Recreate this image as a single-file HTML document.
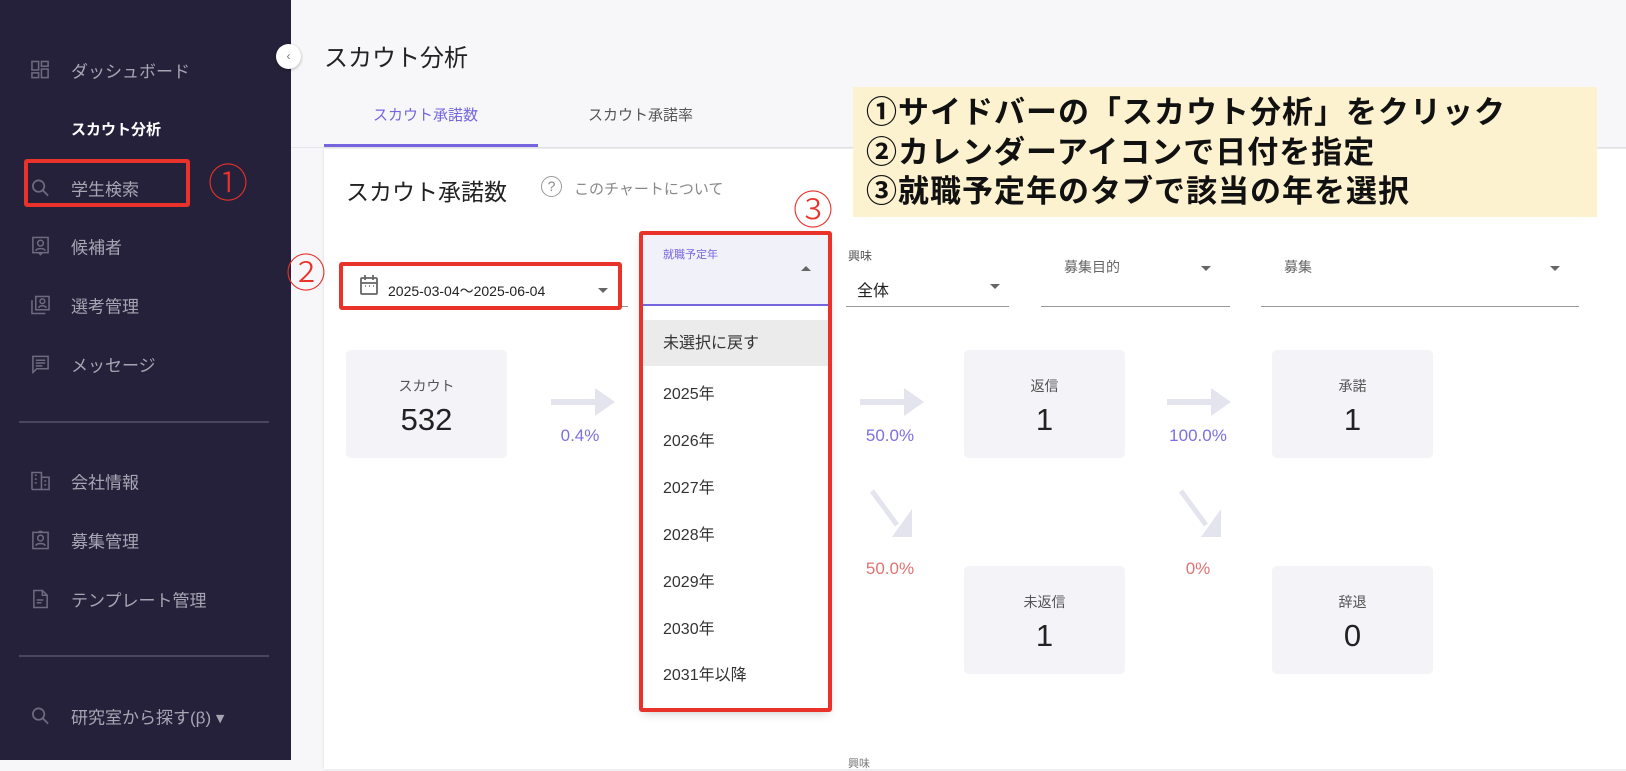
<!DOCTYPE html>
<html><head><meta charset="utf-8"><style>
*{margin:0;padding:0;box-sizing:border-box}
body{width:1626px;height:760px;overflow:hidden;background:#f7f7fa;font-family:"Liberation Sans","Noto Sans CJK JP",sans-serif;position:relative;color:#222}
.a{position:absolute;white-space:nowrap}
.side{position:absolute;left:0;top:0;width:291px;height:760px;background:#25213a}
.si{position:absolute;left:71px;color:#a7a5b3;font-size:17px;transform:translateY(-50%)}
.ic{position:absolute;left:31px;width:19px;height:19px;transform:translateY(-50%)}
.div{position:absolute;left:19px;width:250px;height:2px;background:#4a4660}
.red{position:absolute;border:4px solid #e8322a;border-radius:3px}
.circ{position:absolute;color:#e8322a;font-size:40px;line-height:1;font-weight:300}
.box{position:absolute;width:161px;height:108px;background:#f3f3f8;border-radius:5px;text-align:center}
.box .l{margin-top:26px;font-size:14px;color:#555}
.box .n{font-size:31px;color:#222;margin-top:6px}
.pct{position:absolute;font-size:17px;transform:translateX(-50%)}
.mi{position:absolute;left:663px;font-size:16px;color:#333;transform:translateY(-50%)}
.ul{position:absolute;height:1px;background:#999}
.tri{position:absolute;width:0;height:0;border-left:5px solid transparent;border-right:5px solid transparent;border-top:5px solid #666}
</style></head><body>
<div class="side"></div>
<svg class="ic" style="top:70px" viewBox="0 0 20 20" fill="none" stroke="#6e6b80" stroke-width="1.6"><rect x="1" y="1" width="7" height="9"/><rect x="11" y="1" width="7" height="5"/><rect x="1" y="13" width="7" height="5"/><rect x="11" y="9" width="7" height="9"/></svg>
<div class="si" style="top:70px">ダッシュボード</div>
<div class="si" style="top:129px;color:#fff;font-weight:bold;font-size:15px">スカウト分析</div>
<svg class="ic" style="top:188px" viewBox="0 0 20 20" fill="none" stroke="#6e6b80" stroke-width="1.8"><circle cx="8" cy="8" r="6"/><path d="M12.5 12.5L18 18"/></svg>
<div class="si" style="top:188px">学生検索</div>
<svg class="ic" style="top:246px" viewBox="0 0 20 20" fill="none" stroke="#6e6b80" stroke-width="1.6"><rect x="2" y="1" width="16" height="16"/><circle cx="10" cy="7" r="3"/><path d="M5 15c1-3 9-3 10 0M8 17l2 2 2-2"/></svg>
<div class="si" style="top:246px">候補者</div>
<svg class="ic" style="top:305px" viewBox="0 0 20 20" fill="none" stroke="#6e6b80" stroke-width="1.6"><rect x="5" y="1" width="14" height="14"/><path d="M1 5v14h14"/><circle cx="12" cy="6" r="2.5"/><path d="M8 13c1-3 7-3 8 0"/></svg>
<div class="si" style="top:305px">選考管理</div>
<svg class="ic" style="top:364px" viewBox="0 0 20 20" fill="none" stroke="#6e6b80" stroke-width="1.6"><path d="M2 2h16v13H6l-4 4z"/><path d="M5 6h10M5 9h10M5 12h7"/></svg>
<div class="si" style="top:364px">メッセージ</div>
<div class="div" style="top:421px"></div>
<svg class="ic" style="top:481px" viewBox="0 0 20 20" fill="none" stroke="#6e6b80" stroke-width="1.6"><path d="M1 19V1h10v18M11 6h8v13H1"/><path d="M4 4h2M4 8h2M4 12h2M14 10h2M14 14h2"/></svg>
<div class="si" style="top:481px">会社情報</div>
<svg class="ic" style="top:540px" viewBox="0 0 20 20" fill="none" stroke="#6e6b80" stroke-width="1.6"><rect x="2" y="2" width="16" height="17"/><circle cx="10" cy="8" r="3"/><path d="M5 16c1-3 9-3 10 0M8 1h4"/></svg>
<div class="si" style="top:540px">募集管理</div>
<svg class="ic" style="top:599px" viewBox="0 0 20 20" fill="none" stroke="#6e6b80" stroke-width="1.6"><path d="M3 1h9l5 5v13H3z"/><path d="M12 1v5h5M6 11h7M6 14h5"/></svg>
<div class="si" style="top:599px">テンプレート管理</div>
<div class="div" style="top:655px"></div>
<svg class="ic" style="top:716px" viewBox="0 0 20 20" fill="none" stroke="#6e6b80" stroke-width="1.8"><circle cx="8" cy="8" r="6"/><path d="M12.5 12.5L18 18"/></svg>
<div class="si" style="top:716px">研究室から探す(β) ▾</div>
<div class="red" style="left:24px;top:159px;width:166px;height:48px"></div>
<div class="circ" style="left:208px;top:164px">①</div>
<div class="a" style="left:276px;top:44px;width:25px;height:25px;border-radius:50%;background:#fff;box-shadow:0 1px 3px rgba(0,0,0,.3);font-size:12px;color:#777;text-align:center;line-height:24px">‹</div>

<div class="a" style="left:324px;top:38px;font-size:24px;color:#222">スカウト分析</div>
<div class="a" style="left:291px;top:147px;width:1335px;height:1px;background:#e6e6ec"></div>
<div class="a" style="left:373px;top:104px;font-size:15px;color:#7566e0">スカウト承諾数</div>
<div class="a" style="left:588px;top:104px;font-size:15px;color:#555">スカウト承諾率</div>
<div class="a" style="left:324px;top:144px;width:214px;height:3px;background:#7566e0"></div>
<div class="a" style="left:324px;top:149px;width:1310px;height:620px;background:#fff;box-shadow:0 0 3px rgba(0,0,0,.12)"></div>
<div class="a" style="left:346px;top:173px;font-size:23px;color:#222">スカウト承諾数</div>
<div class="a" style="left:541px;top:176px;width:21px;height:21px;border:1.5px solid #999;border-radius:50%;text-align:center;font-size:14px;line-height:18px;color:#888">?</div>
<div class="a" style="left:574px;top:178px;font-size:15px;color:#888">このチャートについて</div>

<div class="a" style="left:853px;top:87px;width:744px;height:130px;background:#fdf2d0"></div>
<div class="a" style="left:866px;top:93px;font-size:31px;letter-spacing:1px;line-height:39.5px;font-weight:bold;color:#111">①サイドバーの「スカウト分析」をクリック<br>②カレンダーアイコンで日付を指定<br>③就職予定年のタブで該当の年を選択</div>

<!-- date -->
<div class="ul" style="left:343px;top:306px;width:285px"></div>
<svg class="a" style="left:359px;top:274px" width="20" height="22" viewBox="0 0 20 22" fill="none" stroke="#666" stroke-width="1.8"><rect x="2" y="4" width="16" height="16" rx="1"/><path d="M2 9h16M6 1v5M14 1v5"/><path d="M6 12h1M10 12h1M14 12h1" stroke-width="1.5"/></svg>
<div class="a" style="left:388px;top:281px;font-size:14px;color:#222">2025-03-04〜2025-06-04</div>
<div class="tri" style="left:598px;top:288px"></div>
<div class="red" style="left:339px;top:262px;width:283px;height:48px"></div>
<div class="circ" style="left:286px;top:254px">②</div>

<!-- filters -->
<div class="a" style="left:848px;top:247px;font-size:12px;color:#555">興味</div>
<div class="a" style="left:857px;top:277px;font-size:16px;color:#222">全体</div>
<div class="tri" style="left:990px;top:284px"></div>
<div class="ul" style="left:846px;top:306px;width:163px"></div>
<div class="a" style="left:1064px;top:257px;font-size:14px;color:#666">募集目的</div>
<div class="tri" style="left:1201px;top:266px"></div>
<div class="ul" style="left:1041px;top:306px;width:189px"></div>
<div class="a" style="left:1284px;top:257px;font-size:14px;color:#666">募集</div>
<div class="tri" style="left:1550px;top:266px"></div>
<div class="ul" style="left:1261px;top:306px;width:318px"></div>
<div class="a" style="left:848px;top:755px;font-size:11px;color:#777">興味</div>

<!-- boxes -->
<div class="box" style="left:346px;top:350px"><div class="l">スカウト</div><div class="n">532</div></div>
<div class="box" style="left:964px;top:350px"><div class="l">返信</div><div class="n">1</div></div>
<div class="box" style="left:1272px;top:350px"><div class="l">承諾</div><div class="n">1</div></div>
<div class="box" style="left:964px;top:566px"><div class="l">未返信</div><div class="n">1</div></div>
<div class="box" style="left:1272px;top:566px"><div class="l">辞退</div><div class="n">0</div></div>
<svg class="a" style="left:551px;top:388px" width="64" height="28"><path d="M0 11h44V0l20 14-20 14V17H0z" fill="#e4e4ee"/></svg>
<svg class="a" style="left:860px;top:388px" width="64" height="28"><path d="M0 11h44V0l20 14-20 14V17H0z" fill="#e4e4ee"/></svg>
<svg class="a" style="left:1167px;top:388px" width="64" height="28"><path d="M0 11h44V0l20 14-20 14V17H0z" fill="#e4e4ee"/></svg>
<svg class="a" style="left:866px;top:489px" width="50" height="50"><path d="M6 2L31 36" stroke="#e4e4ee" stroke-width="5"/><path d="M26 48h20V20z" fill="#e4e4ee"/></svg>
<svg class="a" style="left:1175px;top:489px" width="50" height="50"><path d="M6 2L31 36" stroke="#e4e4ee" stroke-width="5"/><path d="M26 48h20V20z" fill="#e4e4ee"/></svg>
<div class="pct" style="left:580px;top:426px;color:#7b6fe3">0.4%</div>
<div class="pct" style="left:890px;top:426px;color:#7b6fe3">50.0%</div>
<div class="pct" style="left:1198px;top:426px;color:#7b6fe3">100.0%</div>
<div class="pct" style="left:890px;top:559px;color:#e07373">50.0%</div>
<div class="pct" style="left:1198px;top:559px;color:#e07373">0%</div>

<!-- dropdown -->
<div class="a" style="left:643px;top:235px;width:185px;height:473px;background:#fff;box-shadow:0 4px 10px rgba(0,0,0,.25)"></div>
<div class="a" style="left:643px;top:235px;width:185px;height:71px;background:#f1f1f9"></div>
<div class="a" style="left:643px;top:304px;width:185px;height:2px;background:#7566e0"></div>
<div class="a" style="left:663px;top:246px;font-size:11px;color:#7566e0">就職予定年</div>
<div class="a" style="left:801px;top:266px;width:0;height:0;border-left:5px solid transparent;border-right:5px solid transparent;border-bottom:5px solid #666"></div>
<div class="a" style="left:643px;top:320px;width:185px;height:46px;background:#ebebeb"></div>
<div class="mi" style="top:341px">未選択に戻す</div>
<div class="mi" style="top:392px">2025年</div>
<div class="mi" style="top:439px">2026年</div>
<div class="mi" style="top:486px">2027年</div>
<div class="mi" style="top:533px">2028年</div>
<div class="mi" style="top:580px">2029年</div>
<div class="mi" style="top:627px">2030年</div>
<div class="mi" style="top:673px">2031年以降</div>
<div class="red" style="left:639px;top:231px;width:193px;height:481px"></div>
<div class="circ" style="left:793px;top:191px">③</div>
</body></html>
